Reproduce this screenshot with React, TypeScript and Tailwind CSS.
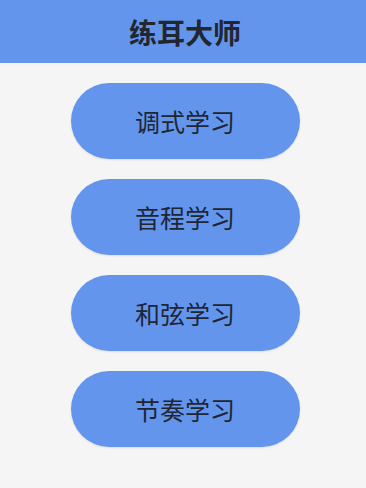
export default function App() {
  const items = ["调式学习", "音程学习", "和弦学习", "节奏学习"];
  return (
    <div
      className="w-[366px] h-[488px] bg-[#f5f5f5] flex flex-col"
      style={{ fontFamily: '"Noto Sans CJK SC", "Noto Sans", sans-serif' }}
    >
      <div className="h-[63px] bg-[#6495ed] flex items-center justify-center pl-[4px]">
        <h1 className="text-[28px] font-bold text-[#222630] leading-none">练耳大师</h1>
      </div>
      <div className="flex flex-col items-center gap-[20px] pt-[20px] pl-[4px]">
        {items.map((t) => (
          <button
            key={t}
            className="w-[229px] h-[76px] rounded-full bg-[#6495ed] flex items-center justify-center text-[25px] text-[#1e2633] leading-none shadow-[0_1px_2px_rgba(0,0,0,0.1)]"
          >
            {t}
          </button>
        ))}
      </div>
    </div>
  );
}
